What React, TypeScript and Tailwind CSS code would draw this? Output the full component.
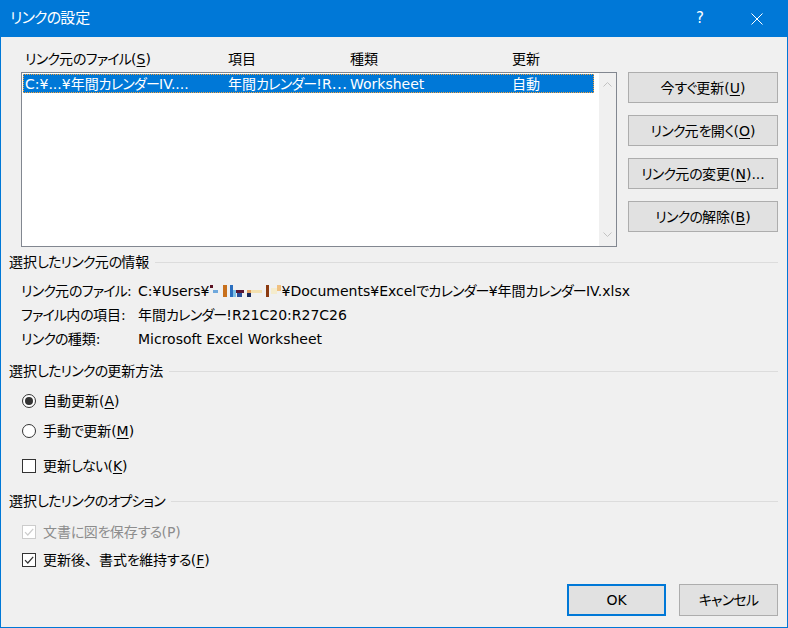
import React from "react";

const FONT =
  "[font-family:'DejaVu_Sans','Noto_Sans_CJK_JP',sans-serif] [font-feature-settings:'palt']";

// Yu Gothic UI kana are narrower than Noto's: pull kana runs in a little, leave kanji and latin alone
const jp = (s: string) =>
  s.split(/([\u3040-\u30ff]+|、)/).map((part, i) => {
    if (part === "、") {
      return (
        <span key={i} className="[font-feature-settings:normal]">
          、
        </span>
      );
    }
    if (/^[\u3040-\u30ff]+$/.test(part)) {
      return (
        <span key={i} className="tracking-[-0.8px]">
          {part}
        </span>
      );
    }
    return part;
  });

const Key = ({ k }: { k: string }) => (
  <>
    (<span className="underline underline-offset-2">{k}</span>)
  </>
);

const SectionHeading = ({ label, className }: { label: string; className: string }) => (
  <div className={`flex items-center h-[20px] pl-[8px] pr-[9px] ${className}`}>
    <span className="text-[#000]">{jp(label)}</span>
    <div className="flex-1 h-px bg-[#dcdcdc] ml-[6px]" />
  </div>
);

const Radio = ({ checked }: { checked?: boolean }) => (
  <span className="w-[14px] h-[14px] rounded-full border border-[#333] bg-white flex items-center justify-center">
    {checked && <span className="w-[8px] h-[8px] rounded-full bg-[#333]" />}
  </span>
);

const Check = ({ checked, disabled }: { checked?: boolean; disabled?: boolean }) => (
  <span
    className={`w-[14px] h-[14px] border bg-white flex items-center justify-center ${
      disabled ? "border-[#cccccc]" : "border-[#333]"
    }`}
  >
    {checked && (
      <svg width="12" height="12" viewBox="0 0 12 12" fill="none">
        <path
          d="M2 6.2 L4.8 9 L10.2 2.8"
          stroke={disabled ? "#cccccc" : "#333"}
          strokeWidth="1.2"
        />
      </svg>
    )}
  </span>
);

const SideButton = ({ label, k, tail }: { label: string; k: string; tail?: string }) => (
  <button className="w-[150px] h-[31px] bg-[#e1e1e1] border border-[#adadad] text-[#000] text-[14px] flex items-center justify-center">
    <span>
      {jp(label)}
      <Key k={k} />
      {tail}
    </span>
  </button>
);

// blurred user name, drawn as the pixel blocks seen in the picture
const Pixelated = () => (
  <svg width="72" height="13" viewBox="0 0 72 13" className="inline-block shrink-0">
    <rect x="0" y="0" width="3" height="3" fill="#5a1020" />
    <rect x="3" y="5" width="5" height="3" fill="#6fa8dc" />
    <rect x="13" y="0" width="4" height="12" fill="#c8701c" />
    <rect x="20" y="0" width="3" height="12" fill="#2a6fc0" />
    <rect x="23" y="5" width="3" height="7" fill="#7fc2e8" />
    <rect x="26" y="5" width="8" height="3" fill="#5a1530" />
    <rect x="27" y="8" width="5" height="4" fill="#2a4f9a" />
    <rect x="37" y="5" width="4" height="3" fill="#e0a060" />
    <rect x="37" y="8" width="4" height="4" fill="#1a2a5a" />
    <rect x="41" y="5" width="11" height="3" fill="#f3e0b0" />
    <rect x="56" y="0" width="3" height="12" fill="#8b3a10" />
    <rect x="61" y="3" width="6" height="6" fill="#f5eccd" />
    <rect x="67" y="0" width="4" height="6" fill="#f0c080" />
  </svg>
);

const CheckRow = ({
  label,
  k,
  checked,
  disabled,
}: {
  label: string;
  k: string;
  checked?: boolean;
  disabled?: boolean;
}) => (
  <label className={`h-[28px] flex items-center gap-[7px] ${disabled ? "text-[#8d8d8d]" : ""}`}>
    <Check checked={checked} disabled={disabled} />
    <span>
      {jp(label)}
      {disabled ? `(${k})` : <Key k={k} />}
    </span>
  </label>
);

export default function App() {
  return (
    <div
      className={`w-[788px] h-[628px] bg-[#0078d7] pl-px pr-px pb-px flex flex-col ${FONT} text-[14px] leading-none`}
    >
      {/* Title bar */}
      <div className="h-[37px] shrink-0 flex items-center text-white text-[15px]">
        <span className="ml-[9px]">{jp("リンクの設定")}</span>
        <span className="ml-auto mr-[47px] text-[15px]">?</span>
        <svg width="12" height="12" viewBox="0 0 12 12" className="mr-[24px]">
          <path d="M0.5 0.5 L11.5 11.5 M11.5 0.5 L0.5 11.5" stroke="white" strokeWidth="1" />
        </svg>
      </div>

      {/* Body */}
      <div className="flex-1 bg-[#f0f0f0] flex flex-col text-[#000]">
        {/* List + side buttons */}
        <div className="flex pl-[20px] mt-[9px]">
          <div className="w-[596px]">
            <div className="h-[26px] grid grid-cols-[203px_122px_162px_1fr] items-center pl-[4px]">
              <span>
                {jp("リンク元のファイル")}
                <Key k="S" />
              </span>
              <span>項目</span>
              <span>種類</span>
              <span>更新</span>
            </div>
            <div className="h-[175px] border border-[#828790] bg-white flex">
              <div className="flex-1 pt-[1px]">
                <div className="ml-[1px] w-[571px] h-[19px] bg-[#0078d7] border border-dotted border-[#f7a23a] text-white grid grid-cols-[203px_122px_162px_1fr] items-center pl-[1px] whitespace-nowrap">
                  <span>{jp("C:¥...¥年間カレンダーIV....")}</span>
                  <span>
                    {jp("年間カレンダー!R")}
                    <span className="font-['Noto_Sans_CJK_JP']">…</span>
                  </span>
                  <span>Worksheet</span>
                  <span>自動</span>
                </div>
              </div>
              <div className="w-[17px] bg-[#f0f0f0] flex flex-col items-center justify-between py-[9px]">
                <svg width="9" height="5" viewBox="0 0 9 5">
                  <path d="M0.5 4.5 L4.5 0.5 L8.5 4.5" stroke="#c2c2c2" fill="none" />
                </svg>
                <svg width="9" height="5" viewBox="0 0 9 5">
                  <path d="M0.5 0.5 L4.5 4.5 L8.5 0.5" stroke="#c2c2c2" fill="none" />
                </svg>
              </div>
            </div>
          </div>
          <div className="ml-[11px] mt-[26px] flex flex-col gap-[12px]">
            <SideButton label="今すぐ更新" k="U" />
            <SideButton label="リンク元を開く" k="O" />
            <SideButton label="リンク元の変更" k="N" tail="..." />
            <SideButton label="リンクの解除" k="B" />
          </div>
        </div>

        {/* Selected link info */}
        <SectionHeading label="選択したリンク元の情報" className="mt-[5px]" />
        <div className="mt-[7px] pl-[20px] flex flex-col">
          <div className="h-[24px] flex items-center whitespace-nowrap">
            <span className="w-[117px] shrink-0">{jp("リンク元のファイル:")}</span>
            <span className="flex items-center">
              C:¥Users¥
              <Pixelated />
              {jp("¥Documents¥Excelでカレンダー¥年間カレンダーIV.xlsx")}
            </span>
          </div>
          <div className="h-[24px] flex items-center">
            <span className="w-[117px] shrink-0">{jp("ファイル内の項目:")}</span>
            <span>{jp("年間カレンダー!R21C20:R27C26")}</span>
          </div>
          <div className="h-[24px] flex items-center">
            <span className="w-[117px] shrink-0">{jp("リンクの種類:")}</span>
            <span>Microsoft Excel Worksheet</span>
          </div>
        </div>

        {/* Update method */}
        <SectionHeading label="選択したリンクの更新方法" className="mt-[10px]" />
        <div className="mt-[5px] pl-[21px] flex flex-col">
          <label className="h-[30px] flex items-center gap-[7px]">
            <Radio checked />
            <span>
              {jp("自動更新")}
              <Key k="A" />
            </span>
          </label>
          <label className="h-[30px] flex items-center gap-[7px]">
            <Radio />
            <span>
              {jp("手動で更新")}
              <Key k="M" />
            </span>
          </label>
          <label className="h-[30px] mt-[5px] flex items-center gap-[7px]">
            <Check />
            <span>
              {jp("更新しない")}
              <Key k="K" />
            </span>
          </label>
        </div>

        {/* Options */}
        <SectionHeading label="選択したリンクのオプション" className="mt-[10px]" />
        <div className="mt-[7px] pl-[21px] flex flex-col">
          <CheckRow label="文書に図を保存する" k="P" checked disabled />
          <CheckRow label="更新後、書式を維持する" k="F" checked />
        </div>

        {/* Dialog buttons */}
        <div className="mt-[10px] flex justify-end gap-[13px] pr-[9px]">
          <button className="w-[99px] h-[32px] bg-[#e1e1e1] border-2 border-[#0078d7] text-[14px]">
            OK
          </button>
          <button className="w-[99px] h-[32px] bg-[#e1e1e1] border border-[#adadad] text-[14px]">
            {jp("キャンセル")}
          </button>
        </div>
      </div>
    </div>
  );
}
